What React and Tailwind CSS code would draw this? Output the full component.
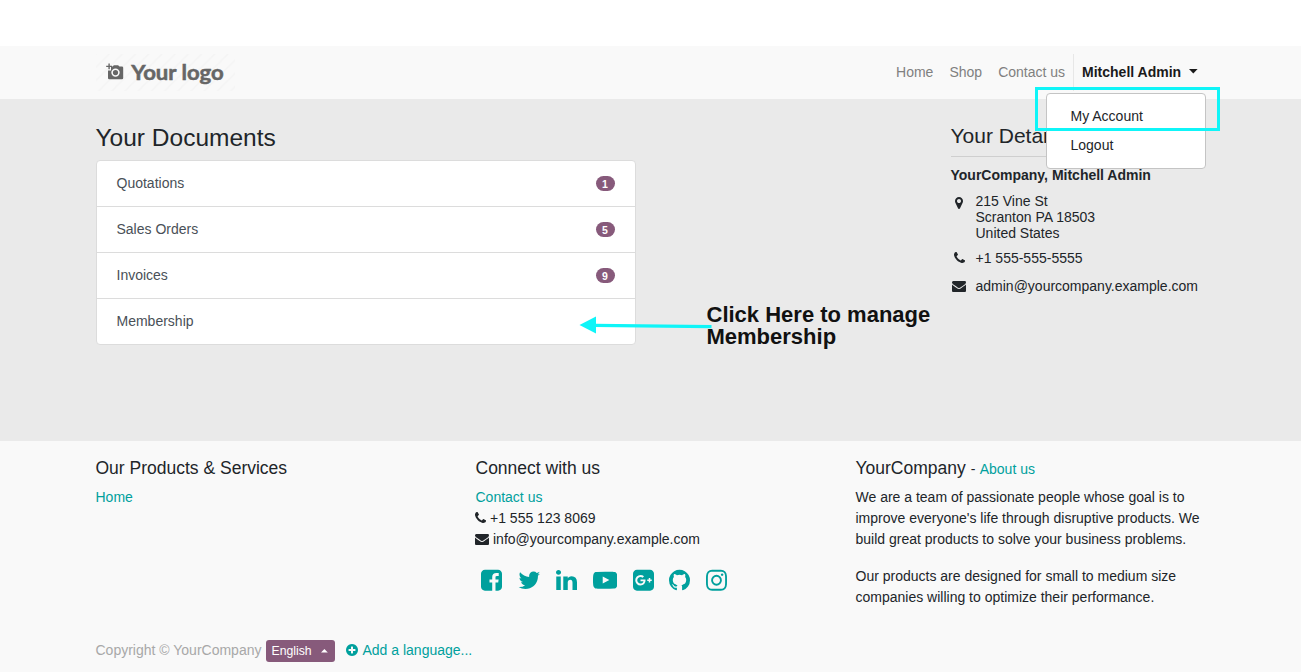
import React from 'react';

const ICONS = {
  facebook: ['128 0 1536 1792', 'M1376 128q119 0 203.5 84.5t84.5 203.5v960q0 119-84.5 203.5t-203.5 84.5h-188v-595h199l30-232h-229v-148q0-56 23.5-84t91.5-28l122-1v-207q-63-9-178-9-136 0-217.5 80t-81.5 226v171h-200v232h200v595h-532q-119 0-203.5-84.5t-84.5-203.5v-960q0-119 84.5-203.5t203.5-84.5h960z'],
  twitter: ['64 0 1664 1792', 'M1684 408q-67 98-162 167 1 14 1 42 0 130-38 259.5t-115.5 248.5-184.5 210.5-258 146-323 54.5q-271 0-496-145 35 4 78 4 225 0 401-138-105-2-188-64.5t-114-159.5q33 5 61 5 43 0 85-11-112-23-185.5-111.5t-73.5-205.5v-4q68 38 146 41-66-44-105-115t-39-154q0-88 44-163 121 149 294.5 238.5t371.5 99.5q-8-38-8-74 0-134 94.5-228.5t228.5-94.5q140 0 236 102 109-21 205-78-37 115-142 178 93-10 186-50z'],
  linkedin: ['128 0 1536 1792', 'M477 625v991h-330v-991h330zm21-306q1 73-50.5 122t-135.5 49h-2q-82 0-132-49t-50-122q0-74 51.5-122.5t134.5-48.5 133 48.5 51 122.5zm1166 729v568h-329v-530q0-105-40.5-164.5t-126.5-59.5q-63 0-105.5 34.5t-63.5 85.5q-11 30-11 81v553h-329q2-399 2-647t-1-296l-1-48h329v144h-2q20-32 41-56t56.5-52 87-43.5 114.5-15.5q171 0 275 113.5t104 332.5z'],
  youtube: ['0 0 1792 1792', 'M711 1128l484-250-484-253v503zm185-862q168 0 324.5 4.5t229.5 9.5l73 4q1 0 17 1.5t23 3 23.5 4.5 28.5 8 28 13 31 19.5 29 26.5q6 6 15.5 18.5t29 58.5 26.5 101q8 64 12.5 136.5t5.5 113.5v176q1 145-18 290-7 55-25 99.5t-32 61.5l-14 17q-14 15-29 26.5t-31 19-28 12.5-28.5 8-24 4.5-23 3-16.5 1.5q-251 19-627 19-207-2-359.5-6.5t-200.5-7.5l-49-4-36-4q-36-5-54.5-10t-51-21-56.5-41q-6-6-15.5-18.5t-29-58.5-26.5-101q-8-64-12.5-136.5t-5.5-113.5v-176q-1-145 18-290 7-55 25-99.5t32-61.5l14-17q14-15 29-26.5t31-19.5 28-13 28.5-8 23.5-4.5 23-3 17-1.5q251-18 627-18z'],
  google: ['128 0 1536 1792', 'M1045 905q0-26-6-64h-362v132h217q-3 24-16.5 50t-37.5 53-66.5 44.5-96.5 17.5q-99 0-169-71t-70-171 70-171 169-71q92 0 153 59l104-101q-108-100-257-100-160 0-272 112.5t-112 271.5 112 271.5 272 112.5q165 0 266.5-105t101.5-270zm345 46h109v-110h-109v-110h-110v110h-110v110h110v110h110v-110zm274-535v960q0 119-84.5 203.5t-203.5 84.5h-960q-119 0-203.5-84.5t-84.5-203.5v-960q0-119 84.5-203.5t203.5-84.5h960q119 0 203.5 84.5t84.5 203.5z'],
  github: ['128 0 1536 1792', 'M896 128q209 0 385.5 103t279.5 279.5 103 385.5q0 251-146.5 451.5t-378.5 277.5q-27 5-40-7t-13-30q0-3 .5-76.5t.5-134.5q0-97-52-142 57-6 102.5-18t94-39 81-66.5 53-105 20.5-150.5q0-119-79-206 37-91-8-204-28-9-81 11t-92 44l-38 24q-93-26-192-26t-192 26q-16-11-42.5-27t-83.5-38.5-85-13.5q-45 113-8 204-79 87-79 206 0 85 20.5 150t52.5 105 80.5 67 94 39 102.5 18q-39 36-49 103-21 10-45 15t-57 5-65.5-21.5-55.5-62.5q-19-32-48.5-52t-49.5-24l-20-3q-21 0-29 4.5t-5 11.5 9 14 13 12l7 5q22 10 43.5 38t31.5 51l10 23q13 38 44 61.5t67 30 69.5 7 55.5-3.5l23-4q0 38 .5 88.5t.5 54.5q0 18-13 30t-40 7q-232-77-378.5-277.5t-146.5-451.5q0-209 103-385.5t279.5-279.5 385.5-103z'],
  instagram: ['128 0 1536 1792', 'M1152 896q0-106-75-181t-181-75-181 75-75 181 75 181 181 75 181-75 75-181zm138 0q0 164-115 279t-279 115-279-115-115-279 115-279 279-115 279 115 115 279zm108-410q0 38-27 65t-65 27-65-27-27-65 27-65 65-27 65 27 27 65zm-502-220q-7 0-76.5-.5t-105.5 0-96.5 3-103 10-71.5 18.5q-50 20-88 58t-58 88q-11 29-18.5 71.5t-10 103-3 96.5 0 105.5.5 76.5-.5 76.5 0 105.5 3 96.5 10 103 18.5 71.5q20 50 58 88t88 58q29 11 71.5 18.5t103 10 96.5 3 105.5 0 76.5-.5 76.5.5 105.5 0 96.5-3 103-10 71.5-18.5q50-20 88-58t58-88q11-29 18.5-71.5t10-103 3-96.5 0-105.5-.5-76.5.5-76.5 0-105.5-3-96.5-10-103-18.5-71.5q-20-50-58-88t-88-58q-29-11-71.5-18.5t-103-10-96.5-3-105.5 0-76.5.5zm768 630q0 229-5 317-10 208-124 322t-322 124q-88 5-317 5t-317-5q-208-10-322-124t-124-322q-5-88-5-317t5-317q10-208 124-322t322-124q88-5 317-5t317 5q208 10 322 124t124 322q5 88 5 317z'],
  phone: ['192 0 1408 1792', 'M1600 1240q0 27-10 70.5t-21 68.5q-21 50-122 106-94 51-186 51-27 0-53-3.5t-57.5-12.5-47-14.5-55.5-20.5-49-18q-98-35-175-83-127-79-264-216t-216-264q-48-77-83-175-3-9-18-49t-20.5-55.5-14.5-47-12.5-57.5-3.5-53q0-92 51-186 56-101 106-122 25-11 68.5-21t70.5-10q14 0 21 3 18 6 53 76 11 19 30 54t35 63.5 31 53.5q3 4 17.5 25t21.5 35.5 7 28.5q0 20-28.5 50t-62 55-62 53-28.5 46q0 9 5 22.5t8.5 20.5 14 24 11.5 19q76 137 174 235t235 174q2 1 19 11.5t24 14 20.5 8.5 22.5 5q18 0 46-28.5t53-62 55-62 50-28.5q14 0 28.5 7t35.5 21.5 25 17.5q25 15 53.5 31t63.5 35 54 30q70 35 76 53 3 7 3 21z'],
  envelope: ['0 0 1792 1792', 'M1792 710v794q0 66-47 113t-113 47h-1472q-66 0-113-47t-47-113v-794q44 49 101 87 362 246 497 345 57 42 92.5 65.5t94.5 48 110 24.5h2q51 0 110-24.5t94.5-48 92.5-65.5q170-123 498-345 57-39 100-87zm0-294q0 79-49 151t-122 123q-376 261-468 325-10 7-42.5 31t-54 38.5-52 32.5-57.5 27-50 9h-2q-23 0-50-9t-57.5-27-52-32.5-54-38.5-42.5-31q-91-64-262-182.5t-205-142.5q-62-42-117-115.5t-55-136.5q0-78 41.5-130t118.5-52h1472q65 0 112.5 47t47.5 113z'],
  marker: ['384 0 1024 1792', 'M1152 640q0-106-75-181t-181-75-181 75-75 181 75 181 181 75 181-75 75-181zm256 0q0 109-33 179l-364 774q-16 33-47.5 52t-67.5 19-67.5-19-46.5-52l-365-774q-33-70-33-179 0-212 150-362t362-150 362 150 150 362z'],
  plus: ['128 0 1536 1792', 'M1344 960v-128q0-26-19-45t-45-19h-256v-256q0-26-19-45t-45-19h-128q-26 0-45 19t-19 45v256h-256q-26 0-45 19t-19 45v128q0 26 19 45t45 19h256v256q0 26 19 45t45 19h128q26 0 45-19t19-45v-256h256q26 0 45-19t19-45zm320-64q0 209-103 385.5t-279.5 279.5-385.5 103-385.5-103-279.5-279.5-103-385.5 103-385.5 279.5-279.5 385.5-103 385.5 103 279.5 279.5 103 385.5z'],
};

function Icon({ name, className }) {
  const [viewBox, d] = ICONS[name];
  return (
    <svg viewBox={viewBox} className={`w-auto shrink-0 ${className}`} fill="currentColor" aria-hidden="true">
      <path d={d} />
    </svg>
  );
}

function Logo() {
  return (
    <svg width="139" height="38" viewBox="0 0 139 38" className="block">
      <defs>
        <pattern id="stripes" width="13.2" height="13.2" patternUnits="userSpaceOnUse">
          <path d="M-2 15.2L15.2 -2M-2 2L2 -2M11.2 15.2L15.2 11.2" stroke="#f4f4f4" strokeWidth="1.5" />
        </pattern>
      </defs>
      <rect width="139" height="37" fill="url(#stripes)" />
      <g fill="#666">
        <path
          fillRule="evenodd"
          d="M16.5 12.5l1.4-1.3h4.2l1.4 1.3h2.4q1.3 0 1.3 1.3v10.1q0 1.3-1.3 1.3H13.3q-1.3 0-1.3-1.3v-7.4h3V12.5zM19.5 14.4a4.2 4.2 0 1 0 0 8.4a4.2 4.2 0 1 0 0-8.4zM19.5 16a2.6 2.6 0 1 1 0 5.2a2.6 2.6 0 1 1 0-5.2z"
        />
        <path d="M12.4 9.5h1.4v2.2H16v1.4h-2.2v2.2h-1.4v-2.2h-2.2v-1.4h2.2z" />
        <text x="35.3" y="25.5" fontSize="20" fontWeight="700" stroke="#666" strokeWidth="0.5" textLength="92.5" lengthAdjust="spacingAndGlyphs" className="font-['Lato',sans-serif]">
          Your logo
        </text>
      </g>
    </svg>
  );
}

const documents = [
  { label: 'Quotations', count: 1 },
  { label: 'Sales Orders', count: 5 },
  { label: 'Invoices', count: 9 },
  { label: 'Membership' },
];

const socials = ['facebook', 'twitter', 'linkedin', 'youtube', 'google', 'github', 'instagram'];

function Header() {
  return (
    <header className="h-[53px] bg-[#f9f9f9]">
      <div className="mx-auto flex h-full w-[1110px] items-center justify-between">
        <Logo />
        <nav className="flex h-[37px] items-center text-[#808080]">
          <a className="px-2">Home</a>
          <a className="px-2">Shop</a>
          <a className="px-2">Contact us</a>
          <div className="relative flex h-full items-center border-l border-[#e7e7e7] px-2 font-bold text-[#1a1a1a]">
            Mitchell Admin
            <svg width="9" height="5" viewBox="0 0 9 5" className="mb-[2px] ml-[7.4px]" fill="currentColor">
              <path d="M0 0h8.6L4.3 4.5z" />
            </svg>
            <div className="absolute top-[39px] right-0 z-10 w-40 rounded border border-[#c4c4c4] bg-white py-2 font-normal text-[#212529]">
              <a className="block px-6 py-1">My Account</a>
              <a className="block px-6 py-1">Logout</a>
            </div>
            <div className="absolute top-[33px] right-[-14.5px] z-20 h-[44px] w-[185px] border-3 border-[#0ff5f8]" />
          </div>
        </nav>
      </div>
    </header>
  );
}

function Details() {
  return (
    <aside className="w-[255px] pt-[24px]">
      <h2 className="border-b border-[#cfcfcf] pb-[8px] text-[21px] leading-[25px]">Your Details</h2>
      <p className="pt-[8px] font-bold">YourCompany, Mitchell Admin</p>
      <div className="mt-[7px] flex leading-4">
        <span className="flex w-[17.5px] justify-center pt-[3px]">
          <Icon name="marker" className="h-[14px]" />
        </span>
        <p className="pl-[7.5px]">
          215 Vine St
          <br />
          Scranton PA 18503
          <br />
          United States
        </p>
      </div>
      <div className="mt-[7px] flex items-center">
        <span className="flex w-[17px] justify-center">
          <Icon name="phone" className="mb-px h-[14px]" />
        </span>
        <span className="pl-[8px]">+1 555-555-5555</span>
      </div>
      <div className="mt-[7px] flex items-center">
        <span className="flex w-[17px] justify-center">
          <Icon name="envelope" className="mb-px h-[14px]" />
        </span>
        <span className="pl-[8px]">admin@yourcompany.example.com</span>
      </div>
    </aside>
  );
}

function Callout() {
  return (
    <div className="absolute top-[205px] left-[483.5px] flex items-start">
      <svg width="133" height="20" viewBox="0 0 133 20" className="mt-[12px] shrink-0">
        <path d="M15 9.4L132.5 10.6" stroke="#0ff5f8" strokeWidth="3.2" />
        <path d="M0.5 9L17 .5V17.5z" fill="#0ff5f8" />
      </svg>
      <p className="ml-[-5.5px] text-[22px] leading-[22px] font-bold whitespace-nowrap text-[#111]">
        Click Here to manage
        <br />
        Membership
      </p>
    </div>
  );
}

function Footer() {
  return (
    <footer className="h-[231px] bg-[#f9f9f9]">
      <div className="mx-auto w-[1110px]">
        <div className="flex h-[198px] pt-[17px]">
          <section className="w-[380px]">
            <h3 className="mb-[8px] text-[17.5px] leading-[21px]">Our Products &amp; Services</h3>
            <a className="text-[#00a09d]">Home</a>
          </section>
          <section className="w-[380px]">
            <h3 className="mb-[8px] text-[17.5px] leading-[21px]">Connect with us</h3>
            <a className="block text-[#00a09d]">Contact us</a>
            <p className="flex items-center gap-1">
              <Icon name="phone" className="mb-[2px] ml-[-0.5px] h-[14px]" />
              +1 555 123 8069
            </p>
            <p className="flex items-center gap-1">
              <Icon name="envelope" className="mb-[2px] ml-[-0.5px] h-[14px]" />
              info@yourcompany.example.com
            </p>
            <div className="mt-[18px] flex gap-[15.6px] pl-[5.5px] text-[#00a09d]">
              {socials.map((name) => (
                <Icon key={name} name={name} className="h-[24.5px]" />
              ))}
            </div>
          </section>
          <section className="w-[350px]">
            <h3 className="mb-[8px] h-[21px] text-[17.5px] leading-[21px]">
              YourCompany <span className="text-[14px] leading-none">- <a className="ml-[0.5px] text-[#00a09d]">About us</a></span>
            </h3>
            <p>We are a team of passionate people whose goal is to improve everyone's life through disruptive products. We build great products to solve your business problems.</p>
            <p className="mt-4">Our products are designed for small to medium size companies willing to optimize their performance.</p>
          </section>
        </div>
        <div className="flex h-[23px] items-center">
          <span className="text-[#a8a8a8]">Copyright © YourCompany</span>
          <button className="ml-[4.5px] flex h-[22px] w-[69px] items-center rounded-[3px] bg-[#875a7b] pt-px pl-[5.5px] text-[12.25px] text-white">
            English
            <svg width="7" height="4" viewBox="0 0 7 4" className="ml-[9px]" fill="currentColor">
              <path d="M0 3.5L3.4 0L6.8 3.5z" />
            </svg>
          </button>
          <a className="ml-[11.5px] flex items-center gap-1 text-[#00a09d]">
            <Icon name="plus" className="mb-px h-[14px]" />
            Add a language...
          </a>
        </div>
      </div>
    </footer>
  );
}

export default function App() {
  return (
    <div className="h-[672px] overflow-hidden bg-white pt-[46px] font-['Liberation_Sans',Arial,sans-serif] text-[14px] leading-[21px] text-[#212529]">
      <Header />
      <main className="h-[342px] bg-[#eaeaea]">
        <div className="relative mx-auto flex w-[1110px] justify-between">
          <section className="w-[540px] pt-[24px]">
            <h1 className="mb-[8px] text-[24.5px] leading-[29px]">Your Documents</h1>
            <ul className="overflow-hidden rounded border border-[#dcdcdc] bg-white text-[#495057]">
              {documents.map(({ label, count }) => (
                <li key={label} className="flex h-[46px] items-center justify-between border-b border-[#dcdcdc] px-5 last:h-[45px] last:border-b-0">
                  {label}
                  {count && (
                    <span className="flex h-[15px] w-[19px] items-center justify-center rounded-full bg-[#875a7b] pt-px text-[10.5px] leading-none font-bold text-white">
                      {count}
                    </span>
                  )}
                </li>
              ))}
            </ul>
          </section>
          <Details />
          <Callout />
        </div>
      </main>
      <Footer />
    </div>
  );
}
